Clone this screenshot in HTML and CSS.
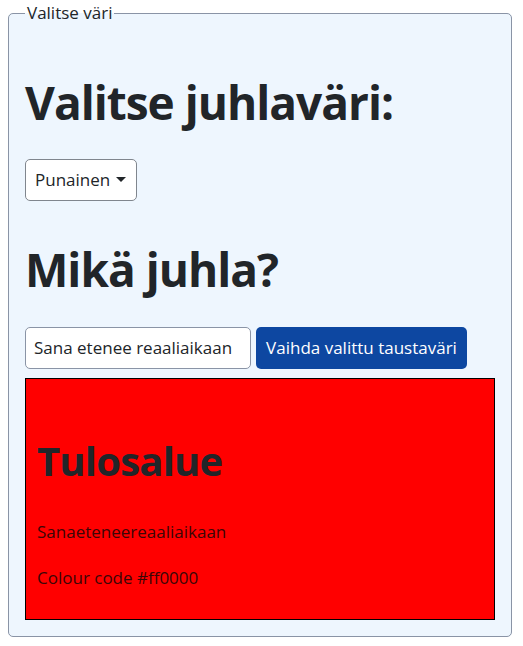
FILE: index.html
```html
<!DOCTYPE html>
<html lang="fi">
<head>
<meta charset="utf-8">
<title>Valitse väri</title>
<link rel="stylesheet" href="styles.css">
</head>
<body>
<fieldset class="panel">
  <legend class="panel-legend">Valitse väri</legend>
  <h1 class="title title-first">Valitse juhlaväri:</h1>
  <button class="dropdown" type="button">Punainen<span class="caret"></span></button>
  <h1 class="title title-second">Mikä juhla?</h1>
  <div class="controls">
    <input class="text-input" type="text" value="Sana etenee reaaliaikaan">
    <button class="primary" type="button">Vaihda valittu taustaväri</button>
  </div>
  <div class="result">
    <h1 class="result-title">Tulosalue</h1>
    <p class="result-text">Sanaeteneereaaliaikaan</p>
    <p class="result-text">Colour code #ff0000</p>
  </div>
</fieldset>
</body>
</html>
```

FILE: styles.css
```css
html, body {
  margin: 0;
  padding: 0;
  background: #ffffff;
}
body {
  font-family: "Open Sans", "Noto Sans", sans-serif;
  color: #212529;
  font-size: 17px;
  line-height: 1.5;
}
.panel {
  box-sizing: border-box;
  width: 504px;
  margin: 0 0 0 8px;
  padding: 0 16px 16px 16px;
  border: 1px solid #8a94a6;
  border-radius: 5px;
  background: #eef6fe;
}
.panel-legend {
  padding: 0 2px;
  font-size: 17px;
  line-height: 26px;
  color: #212529;
}
.title {
  font-size: 46px;
  font-weight: 700;
  letter-spacing: -1px;
  line-height: 1.2;
  margin: 0;
}
.title-first {
  margin-top: 48.5px;
  margin-bottom: 29.2px;
}
.title-second {
  margin-top: 41.6px;
  margin-bottom: 29.2px;
}
.dropdown {
  display: inline-flex;
  align-items: center;
  box-sizing: border-box;
  height: 42px;
  padding: 0 10px 0 9px;
  font: inherit;
  color: #212529;
  background: #ffffff;
  border: 1px solid #80868e;
  border-radius: 5px;
}
.caret {
  display: inline-block;
  margin-left: 6px;
  border-top: 5px solid #212529;
  border-left: 5px solid transparent;
  border-right: 5px solid transparent;
}
.controls {
  display: flex;
  gap: 5px;
  margin-bottom: 9px;
}
.text-input {
  box-sizing: border-box;
  width: 226px;
  height: 42px;
  padding: 0 8px;
  font: inherit;
  color: #212529;
  background: #ffffff;
  border: 1px solid #8a94a6;
  border-radius: 5px;
}
.primary {
  box-sizing: border-box;
  width: 211px;
  height: 42px;
  padding: 0;
  font: inherit;
  white-space: nowrap;
  color: #ffffff;
  background: #0d47a1;
  border: 0;
  border-radius: 5px;
}
.result {
  box-sizing: border-box;
  width: 470px;
  height: 242px;
  padding: 58.5px 11px 0 11px;
  background: #ff0000;
  border: 1px solid #000000;
}
.result-title {
  font-size: 40px;
  font-weight: 700;
  letter-spacing: -0.8px;
  line-height: 1.2;
  margin: 0 0 34px 0;
}
.result-text {
  margin: 0 0 20.5px 0;
  color: #3b0606;
}
```
